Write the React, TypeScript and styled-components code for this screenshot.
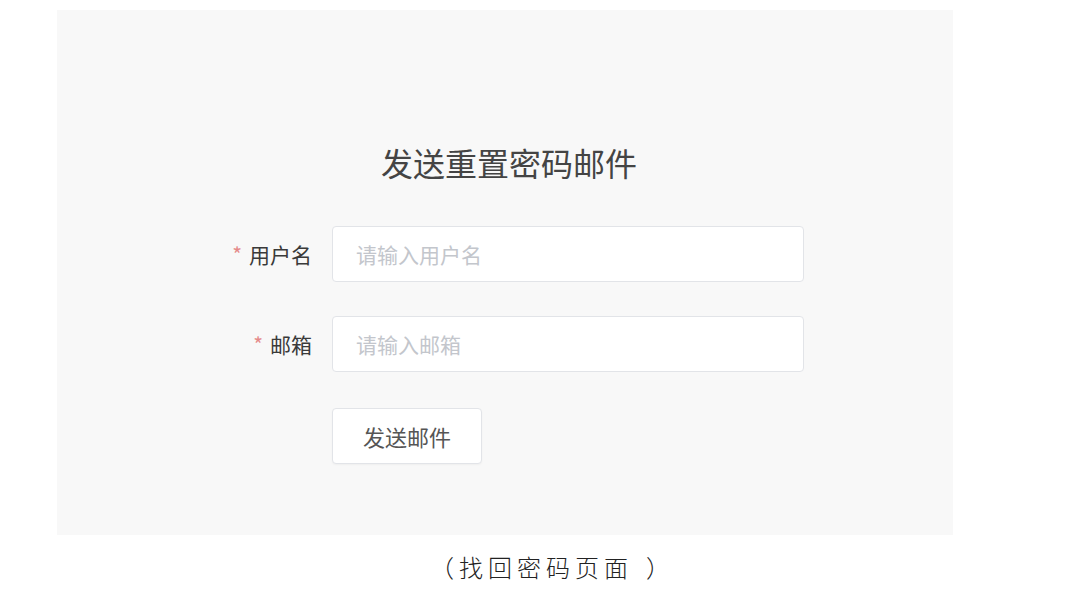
import {FC} from 'react';
import styled, {createGlobalStyle} from 'styled-components';

const GlobalStyle = createGlobalStyle`
  html, body {
    margin: 0;
    padding: 0;
    background: #ffffff;
  }
  body {
    font-family: "Noto Sans CJK SC", "Liberation Sans", sans-serif;
  }
  * {
    box-sizing: border-box;
  }
`;

const Page = styled.div`
  width: 1080px;
  height: 591px;
  padding: 10px 0 0 57px;
  display: flex;
  flex-direction: column;
`;

const Panel = styled.div`
  width: 896px;
  height: 525px;
  background: #f8f8f8;
  display: flex;
  flex-direction: column;
  align-items: center;
  padding-top: 132px;
`;

const Title = styled.h2`
  margin: 0 0 44px 8px;
  font-size: 32px;
  line-height: 40px;
  font-weight: 400;
  color: #444;
`;

const Form = styled.form`
  align-self: flex-start;
  margin-left: 135px;
  display: grid;
  grid-template-columns: 120px 472px;
  column-gap: 20px;
  row-gap: 34px;
  align-items: center;
`;

const Label = styled.label<{$required?: boolean}>`
  justify-self: end;
  font-size: 21px;
  color: #3a3a3a;
  line-height: 56px;

  &::before {
    content: ${({$required}) => ($required ? "'*'" : "''")};
    color: #e58a8a;
    margin-right: 7px;
  }
`;

const Input = styled.input`
  height: 56px;
  width: 100%;
  padding: 0 23px;
  border: 1px solid #e2e4e8;
  border-radius: 4px;
  background: #fff;
  font-family: inherit;
  font-size: 21px;
  color: #444;
  outline: none;

  &::placeholder {
    color: #c3c6cc;
  }
`;

const Spacer = styled.div``;

const Button = styled.button`
  width: 150px;
  height: 56px;
  margin-top: 2px;
  border: 1px solid #e2e4e8;
  border-radius: 4px;
  background: #fff;
  font-family: inherit;
  font-size: 22px;
  color: #555;
  cursor: pointer;
  box-shadow: 0 1px 2px rgba(0, 0, 0, 0.04);
`;

const Caption = styled.p`
  margin: 16px 0 0 373px;
  display: flex;
  align-items: center;
  font-family: "Noto Sans CJK SC", serif;
  font-size: 24px;
  line-height: 32px;
  color: #222;
  font-weight: 300;
  white-space: nowrap;
  text-spacing-trim: space-all;
`;

const CaptionText = styled.span`
  letter-spacing: 5px;
`;

const Paren = styled.span<{$side: 'open' | 'close'}>`
  display: inline-block;
  width: 24px;
  text-align: left;
  text-spacing-trim: space-all;
  margin: ${({$side}) => ($side === 'open' ? '0 5px 0 0' : '0 0 0 13px')};
`;

const App: FC = () => {
  return (
    <>
      <GlobalStyle />
      <Page>
        <Panel>
          <Title>发送重置密码邮件</Title>
          <Form onSubmit={e => e.preventDefault()}>
            <Label $required htmlFor="username">
              用户名
            </Label>
            <Input id="username" placeholder="请输入用户名" />
            <Label $required htmlFor="email">
              邮箱
            </Label>
            <Input id="email" placeholder="请输入邮箱" />
            <Spacer />
            <Button type="submit">发送邮件</Button>
          </Form>
        </Panel>
        <Caption>
          <Paren $side="open">（</Paren>
          <CaptionText>找回密码页面</CaptionText>
          <Paren $side="close">）</Paren>
        </Caption>
      </Page>
    </>
  );
};

export default App;
